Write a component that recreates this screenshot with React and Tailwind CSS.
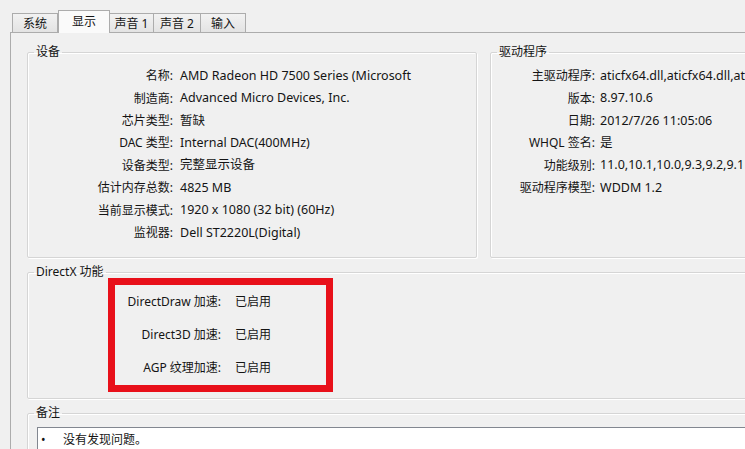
import React from 'react';

const tabs = [
  { label: '系统', w: 'w-[46px]' },
  { label: '显示', w: 'w-[52px]', active: true },
  { label: '声音 1', w: 'w-[45px]' },
  { label: '声音 2', w: 'w-[48px]' },
  { label: '输入', w: 'w-[46px]' },
];

const device = [
  ['名称:', 'AMD Radeon HD 7500 Series (Microsoft'],
  ['制造商:', 'Advanced Micro Devices, Inc.'],
  ['芯片类型:', '暂缺'],
  ['DAC 类型:', 'Internal DAC(400MHz)'],
  ['设备类型:', '完整显示设备'],
  ['估计内存总数:', '4825 MB'],
  ['当前显示模式:', '1920 x 1080 (32 bit) (60Hz)'],
  ['监视器:', 'Dell ST2220L(Digital)'],
];

const driver = [
  ['主驱动程序:', 'aticfx64.dll,aticfx64.dll,atic'],
  ['版本:', '8.97.10.6'],
  ['日期:', '2012/7/26 11:05:06'],
  ['WHQL 签名:', '是'],
  ['功能级别:', '11.0,10.1,10.0,9.3,9.2,9.1'],
  ['驱动程序模型:', 'WDDM 1.2'],
];

const directx = [
  ['DirectDraw 加速:', '已启用'],
  ['Direct3D 加速:', '已启用'],
  ['AGP 纹理加速:', '已启用'],
];

const boxCls =
  'min-w-0 shrink-0 border border-[#d5d5d5] rounded-[2px] shadow-[inset_1px_1px_0_#ffffff,1px_1px_0_#ffffff]';

function Group({ title, className, children }) {
  return (
    <fieldset className={`${boxCls} ${className}`}>
      <legend className="ml-[6px] px-[2px] leading-[16px]">{title}</legend>
      {children}
    </fieldset>
  );
}

export default function App() {
  return (
    <div className="w-[745px] h-[449px] overflow-hidden bg-[#f0f0f0] text-[12px] text-[#141414] font-['Noto_Sans','Noto_Sans_CJK_SC',sans-serif]">
      {/* tabs */}
      <div className="relative z-10 flex items-end h-[32px] pl-[12px]">
        {tabs.map((t) =>
          t.active ? (
            <div
              key={t.label}
              className={`${t.w} h-[23px] -mb-px flex items-center justify-center bg-[#fafafa] border border-b-0 border-[#acacac] pb-[1px]`}
            >
              {t.label}
            </div>
          ) : (
            <div
              key={t.label}
              className={`${t.w} h-[19px] flex items-center justify-center bg-gradient-to-b from-[#f2f2f2] to-[#e3e3e3] border border-b-0 border-[#acacac] -ml-px first:ml-0 pt-[1px]`}
            >
              {t.label}
            </div>
          )
        )}
      </div>

      {/* tab panel */}
      <div className="ml-[10px] h-[420px] border-l border-t border-[#acacac] pl-[16px] pt-[11px]">
        <div className="flex">
          <Group title="设备" className="w-[450px] h-[214px]">
            <div className="pt-[5px]">
              {device.map(([k, v]) => (
                <div key={k} className="flex h-[22.4px] items-center whitespace-nowrap">
                  <span className="w-[145px] text-right">{k}</span>
                  <span className="ml-[7px] text-[12.5px]">{v}</span>
                </div>
              ))}
            </div>
          </Group>
          <Group title="驱动程序" className="ml-[13px] w-[300px] h-[214px]">
            <div className="pt-[5px]">
              {driver.map(([k, v]) => (
                <div key={k} className="flex h-[22.4px] items-center whitespace-nowrap">
                  <span className="w-[104px] shrink-0 text-right">{k}</span>
                  <span className="ml-[5px] text-[12.5px]">{v}</span>
                </div>
              ))}
            </div>
          </Group>
        </div>

        <Group title="DirectX 功能" className="mt-[6px] w-[800px] h-[135px]">
          <div className="-mt-[2px] ml-[80px] w-[225px] border-[7px] border-[#e8101a] pb-[1px]">
            {directx.map(([k, v]) => (
              <div key={k} className="flex h-[33px] items-center whitespace-nowrap">
                <span className="w-[106px] text-right">{k}</span>
                <span className="ml-[14px]">{v}</span>
              </div>
            ))}
          </div>
        </Group>

        <Group title="备注" className="mt-[6px] w-[800px] h-[60px]">
          <div className="mt-[6px] ml-[9px] h-[40px] bg-white border border-[#828790] pl-[3px] flex items-start pt-[3px]">
            <span className="w-[22px]">•</span>
            <span>没有发现问题。</span>
          </div>
        </Group>
      </div>
    </div>
  );
}
